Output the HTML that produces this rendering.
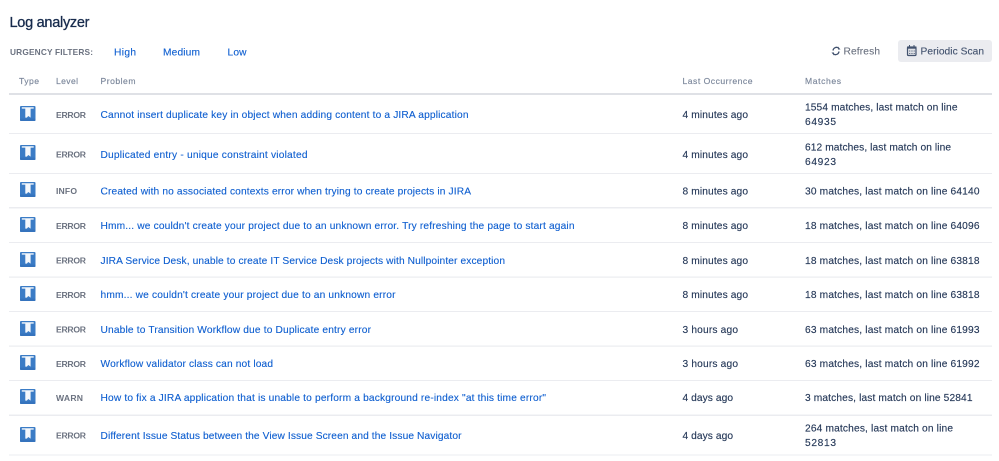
<!DOCTYPE html>
<html><head><meta charset="utf-8"><style>
html,body{margin:0;padding:0;background:#fff;width:999px;height:461px;overflow:hidden}
svg{display:block}
text{font-family:"Liberation Sans",sans-serif;font-size:10.2px}
.p{fill:#0f5fd0;stroke:#0f5fd0;stroke-width:.12}
.l{fill:#6b7280;font-weight:bold;font-size:8.6px}
.t{fill:#253858;stroke:#253858;stroke-width:.14}
.h{fill:#7a869a;font-size:8.6px;stroke:#7a869a;stroke-width:.15}
.f{fill:#0f5fd0;stroke:#0f5fd0;stroke-width:.12}
</style></head><body>
<svg width="999" height="461" viewBox="0 0 999 461" xmlns="http://www.w3.org/2000/svg">
<defs><g id="i"><rect x="0" y="0" width="15.5" height="15" rx="1" fill="#3b7cc6"/><path d="M1.800 1.300H13.700V2.600H10.600V11.600L8.300 10 6.800 11.600 5.300 11.600V2.600H1.800Z" fill="#fff" opacity=".95"/><rect x="0" y="12.500" width="15.500" height="2.500" rx="1" fill="#3573bd"/></g></defs>
<text x="9.5" y="27" style="font-size:14.500px" fill="#172b4d" stroke="#172b4d" stroke-width=".3" textLength="80" lengthAdjust="spacing">Log analyzer</text>
<text x="10" y="55" style="font-size:8.300px;font-weight:bold" fill="#6b7280" textLength="83" lengthAdjust="spacing">URGENCY FILTERS:</text>
<text x="114" y="55.5" class="f" textLength="22" lengthAdjust="spacing">High</text>
<text x="163" y="55.5" class="f" textLength="37" lengthAdjust="spacing">Medium</text>
<text x="227.500" y="55.5" class="f" textLength="19" lengthAdjust="spacing">Low</text>
<g fill="none" stroke="#42526e" stroke-width="1.3"><path d="M833 50.500A3.500 3.500 0 0 1 838.500 48"/><path d="M839 51.500A3.500 3.500 0 0 1 833.500 54"/></g>
<path d="M838 46.500V49.500H840.500ZM834 55.500V52.500H831.500Z" fill="#42526e"/>
<text x="843.500" y="54.500" fill="#6b7280" stroke="#6b7280" stroke-width=".12" textLength="36.500" lengthAdjust="spacing">Refresh</text>
<rect x="898" y="40" width="94" height="22" rx="3" fill="#ebecf0"/>
<rect x="907.500" y="47" width="8.500" height="8.500" rx="1" fill="#dfe1e6" stroke="#42526e" stroke-width="1.2"/><rect x="907" y="46.500" width="9.500" height="2.200" fill="#42526e"/><path d="M909.500 45V47M914 45V47" stroke="#42526e"/><path d="M909 51H915M909 53.500H915" stroke="#42526e" stroke-width=".7" stroke-dasharray="1 .7"/>
<text x="920.500" y="54.500" fill="#42526e" stroke="#42526e" stroke-width=".12" textLength="63.500" lengthAdjust="spacing">Periodic Scan</text>
<text x="19" y="84" class="h" textLength="20" lengthAdjust="spacing">Type</text>
<text x="56" y="84" class="h" textLength="22" lengthAdjust="spacing">Level</text>
<text x="100.500" y="84" class="h" textLength="35" lengthAdjust="spacing">Problem</text>
<text x="682.500" y="84" class="h" textLength="70" lengthAdjust="spacing">Last Occurrence</text>
<text x="805" y="84" class="h" textLength="36" lengthAdjust="spacing">Matches</text>
<rect x="9" y="93" width="983" height="2" fill="#dfe1e6"/>
<g fill="#ebecf0"><rect x="9" y="133" width="983" height="1"/><rect x="9" y="173" width="983" height="1"/><rect x="9" y="207" width="983" height="1.500"/><rect x="9" y="242" width="983" height="1"/><rect x="9" y="276.500" width="983" height="1.200"/><rect x="9" y="311" width="983" height="1"/><rect x="9" y="345.500" width="983" height="1.200"/><rect x="9" y="380" width="983" height="1"/><rect x="9" y="414.500" width="983" height="1.500"/><rect x="9" y="454.500" width="983" height="1"/></g>
<use href="#i" x="20" y="106"/><use href="#i" x="20" y="145"/><use href="#i" x="20" y="182"/><use href="#i" x="20" y="217"/><use href="#i" x="20" y="252"/><use href="#i" x="20" y="286"/><use href="#i" x="20" y="321"/><use href="#i" x="20" y="355"/><use href="#i" x="20" y="389"/><use href="#i" x="20" y="427"/>
<text x="56" y="118" class="l" textLength="30" lengthAdjust="spacing">ERROR</text>
<text x="56" y="157.500" class="l" textLength="30" lengthAdjust="spacing">ERROR</text>
<text x="56" y="194" class="l" textLength="21" lengthAdjust="spacing">INFO</text>
<text x="56" y="229" class="l" textLength="30" lengthAdjust="spacing">ERROR</text>
<text x="56" y="263.500" class="l" textLength="30" lengthAdjust="spacing">ERROR</text>
<text x="56" y="298" class="l" textLength="30" lengthAdjust="spacing">ERROR</text>
<text x="56" y="332.500" class="l" textLength="30" lengthAdjust="spacing">ERROR</text>
<text x="56" y="367" class="l" textLength="30" lengthAdjust="spacing">ERROR</text>
<text x="56" y="401" class="l" textLength="27" lengthAdjust="spacing">WARN</text>
<text x="56" y="438.500" class="l" textLength="30" lengthAdjust="spacing">ERROR</text>
<text x="100.500" y="118" class="p" textLength="368" lengthAdjust="spacing">Cannot insert duplicate key in object when adding content to a JIRA application</text>
<text x="100.500" y="158" class="p" textLength="207" lengthAdjust="spacing">Duplicated entry - unique constraint violated</text>
<text x="100.500" y="194.500" class="p" textLength="370.500" lengthAdjust="spacing">Created with no associated contexts error when trying to create projects in JIRA</text>
<text x="100.500" y="229" class="p" textLength="474" lengthAdjust="spacing">Hmm... we couldn't create your project due to an unknown error. Try refreshing the page to start again</text>
<text x="100.500" y="264" class="p" textLength="404.500" lengthAdjust="spacing">JIRA Service Desk, unable to create IT Service Desk projects with Nullpointer exception</text>
<text x="100.500" y="298" class="p" textLength="295" lengthAdjust="spacing">hmm... we couldn't create your project due to an unknown error</text>
<text x="100.500" y="333" class="p" textLength="270.500" lengthAdjust="spacing">Unable to Transition Workflow due to Duplicate entry error</text>
<text x="100.500" y="367" class="p" textLength="172.500" lengthAdjust="spacing">Workflow validator class can not load</text>
<text x="100.500" y="401" class="p" textLength="445.500" lengthAdjust="spacing">How to fix a JIRA application that is unable to perform a background re-index "at this time error"</text>
<text x="100.500" y="439" class="p" textLength="361" lengthAdjust="spacing">Different Issue Status between the View Issue Screen and the Issue Navigator</text>
<text x="682.500" y="118" class="t" textLength="65.500" lengthAdjust="spacing">4 minutes ago</text>
<text x="682.500" y="158" class="t" textLength="65.500" lengthAdjust="spacing">4 minutes ago</text>
<text x="682.500" y="194.500" class="t" textLength="65.500" lengthAdjust="spacing">8 minutes ago</text>
<text x="682.500" y="229" class="t" textLength="65.500" lengthAdjust="spacing">8 minutes ago</text>
<text x="682.500" y="264" class="t" textLength="65.500" lengthAdjust="spacing">8 minutes ago</text>
<text x="682.500" y="298" class="t" textLength="65.500" lengthAdjust="spacing">8 minutes ago</text>
<text x="682.500" y="333" class="t" textLength="55.500" lengthAdjust="spacing">3 hours ago</text>
<text x="682.500" y="367" class="t" textLength="55.500" lengthAdjust="spacing">3 hours ago</text>
<text x="682.500" y="401" class="t" textLength="50.500" lengthAdjust="spacing">4 days ago</text>
<text x="682.500" y="439" class="t" textLength="50.500" lengthAdjust="spacing">4 days ago</text>
<text x="805" y="110.500" class="t" textLength="152.500" lengthAdjust="spacing">1554 matches, last match on line</text>
<text x="805" y="125" class="t" textLength="31" lengthAdjust="spacing">64935</text>
<text x="805" y="150.500" class="t" textLength="146" lengthAdjust="spacing">612 matches, last match on line</text>
<text x="805" y="165" class="t" textLength="31" lengthAdjust="spacing">64923</text>
<text x="805" y="194.500" class="t" textLength="174.500" lengthAdjust="spacing">30 matches, last match on line 64140</text>
<text x="805" y="229" class="t" textLength="174.500" lengthAdjust="spacing">18 matches, last match on line 64096</text>
<text x="805" y="264" class="t" textLength="174.500" lengthAdjust="spacing">18 matches, last match on line 63818</text>
<text x="805" y="298" class="t" textLength="174.500" lengthAdjust="spacing">18 matches, last match on line 63818</text>
<text x="805" y="333" class="t" textLength="174.500" lengthAdjust="spacing">63 matches, last match on line 61993</text>
<text x="805" y="367" class="t" textLength="174.500" lengthAdjust="spacing">63 matches, last match on line 61992</text>
<text x="805" y="401" class="t" textLength="167.500" lengthAdjust="spacing">3 matches, last match on line 52841</text>
<text x="805" y="431.500" class="t" textLength="148" lengthAdjust="spacing">264 matches, last match on line</text>
<text x="805" y="446" class="t" textLength="31" lengthAdjust="spacing">52813</text>
</svg>
</body></html>
